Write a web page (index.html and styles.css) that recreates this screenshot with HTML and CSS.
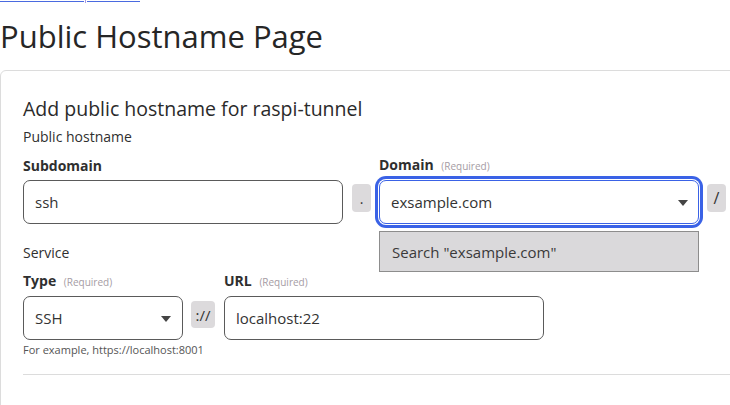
FILE: index.html
```html
<!DOCTYPE html>
<html lang="en">
<head>
<meta charset="utf-8">
<title>Public Hostname Page</title>
<link rel="stylesheet" href="styles.css">
</head>
<body>
<nav class="crumbs" aria-hidden="true">
  <span class="crumb crumb-a"></span>
  <span class="crumb-sep"></span>
  <span class="crumb crumb-b"></span>
</nav>
<h1 class="page-title">Public Hostname Page</h1>
<section class="card">
  <h2 class="card-title">Add public hostname for raspi-tunnel</h2>
  <div class="group-title">Public hostname</div>
  <div class="row">
    <div class="field field-wide">
      <label class="label">Subdomain</label>
      <div class="control"><span class="value">ssh</span></div>
    </div>
    <span class="addon addon-dot">.</span>
    <div class="field field-wide">
      <label class="label">Domain <span class="req">(Required)</span></label>
      <div class="control control-focus">
        <span class="value">exsample.com</span>
        <span class="caret"></span>
        <div class="menu">Search "exsample.com"</div>
      </div>
    </div>
    <span class="addon addon-slash">/</span>
  </div>
  <div class="group-title group-service">Service</div>
  <div class="row">
    <div class="field field-narrow">
      <label class="label">Type <span class="req">(Required)</span></label>
      <div class="control"><span class="value">SSH</span><span class="caret caret-type"></span></div>
    </div>
    <span class="addon addon-proto">://</span>
    <div class="field field-wide">
      <label class="label">URL <span class="req">(Required)</span></label>
      <div class="control"><span class="value">localhost:22</span></div>
    </div>
  </div>
  <div class="help">For example, https://localhost:8001</div>
  <hr class="divider">
</section>
</body>
</html>
```
FILE: styles.css
```css
* { box-sizing: border-box; }
html, body { margin: 0; padding: 0; background: #fff; }
body {
  font-family: "Open Sans", "Noto Sans", sans-serif;
  color: #2f2f2f;
  overflow: hidden;
}
.crumbs {
  display: flex;
  align-items: flex-start;
  height: 3px;
}
.crumb {
  display: block;
  height: 2px;
  border-bottom: 1px solid #4a6ae0;
}
.crumb-a { width: 84px; }
.crumb-b { width: 53px; }
.crumb-sep {
  display: block;
  width: 1px;
  height: 3px;
  margin: 0 1px;
  background: #a99ae6;
}
.page-title {
  margin: 13px 0 0 0;
  font-size: 31px;
  font-weight: 500;
  line-height: 40px;
  color: #262626;
}
.card {
  margin-top: 14px;
  margin-right: -12px;
  border: 1px solid #dcdcdc;
  border-radius: 6px;
  padding: 25px 0 40px 22px;
}
.card-title {
  margin: 0;
  font-size: 19.5px;
  font-weight: 500;
  line-height: 26px;
  color: #2a2a2a;
}
.group-title {
  font-size: 14px;
  line-height: 20px;
  margin-top: 5px;
}
.group-service { margin-top: 19px; }
.row {
  display: flex;
  align-items: flex-end;
}
.field { display: flex; flex-direction: column; }
.field-wide { width: 320px; }
.field-narrow { width: 160px; }
.label {
  font-size: 14px;
  font-weight: 700;
  line-height: 20px;
  margin: 8px 0 4px 0;
}
.req {
  font-size: 10px;
  font-weight: 400;
  color: #a59ca4;
  margin-left: 4px;
}
.control {
  position: relative;
  height: 44px;
  border: 1px solid #5a5a5a;
  border-radius: 7px;
  display: flex;
  align-items: center;
  padding-left: 11px;
  font-size: 15px;
  color: #333;
  background: #fff;
}
.control-focus {
  border-color: #3a62e6;
  box-shadow: 0 0 0 1px #fff, 0 0 0 4px #3a62e6;
  padding-left: 11px;
}
.caret {
  position: absolute;
  right: 10px;
  top: 19px;
  width: 0;
  height: 0;
  border-left: 5px solid transparent;
  border-right: 5px solid transparent;
  border-top: 6px solid #444;
}
.caret-type { right: 11px; }
.menu {
  position: absolute;
  left: -1px;
  right: -1px;
  top: 50px;
  height: 41px;
  background: #dad9db;
  border: 1px solid #8d8d8d;
  padding-left: 12px;
  display: flex;
  align-items: center;
  font-size: 15px;
  color: #3a3a3a;
}
.addon {
  display: flex;
  align-items: center;
  justify-content: center;
  height: 28px;
  margin: 0 8px 12px 9px;
  background: #dcdadc;
  border-radius: 4px;
  font-size: 14px;
  color: #333;
}
.addon-dot { width: 19px; margin-left: 9px; margin-right: 8px; }
.addon-slash { width: 19px; margin-left: 8px; margin-right: 0; font-size: 16px; }
.addon-proto { width: 24px; margin-left: 8px; margin-right: 9px; height: 27px; font-size: 15px; }
.help {
  font-size: 11px;
  line-height: 16px;
  margin-top: 2px;
  color: #555;
}
.divider {
  margin: 16px 0 0 0;
  border: 0;
  border-top: 1px solid #dcdcdc;
}
```
